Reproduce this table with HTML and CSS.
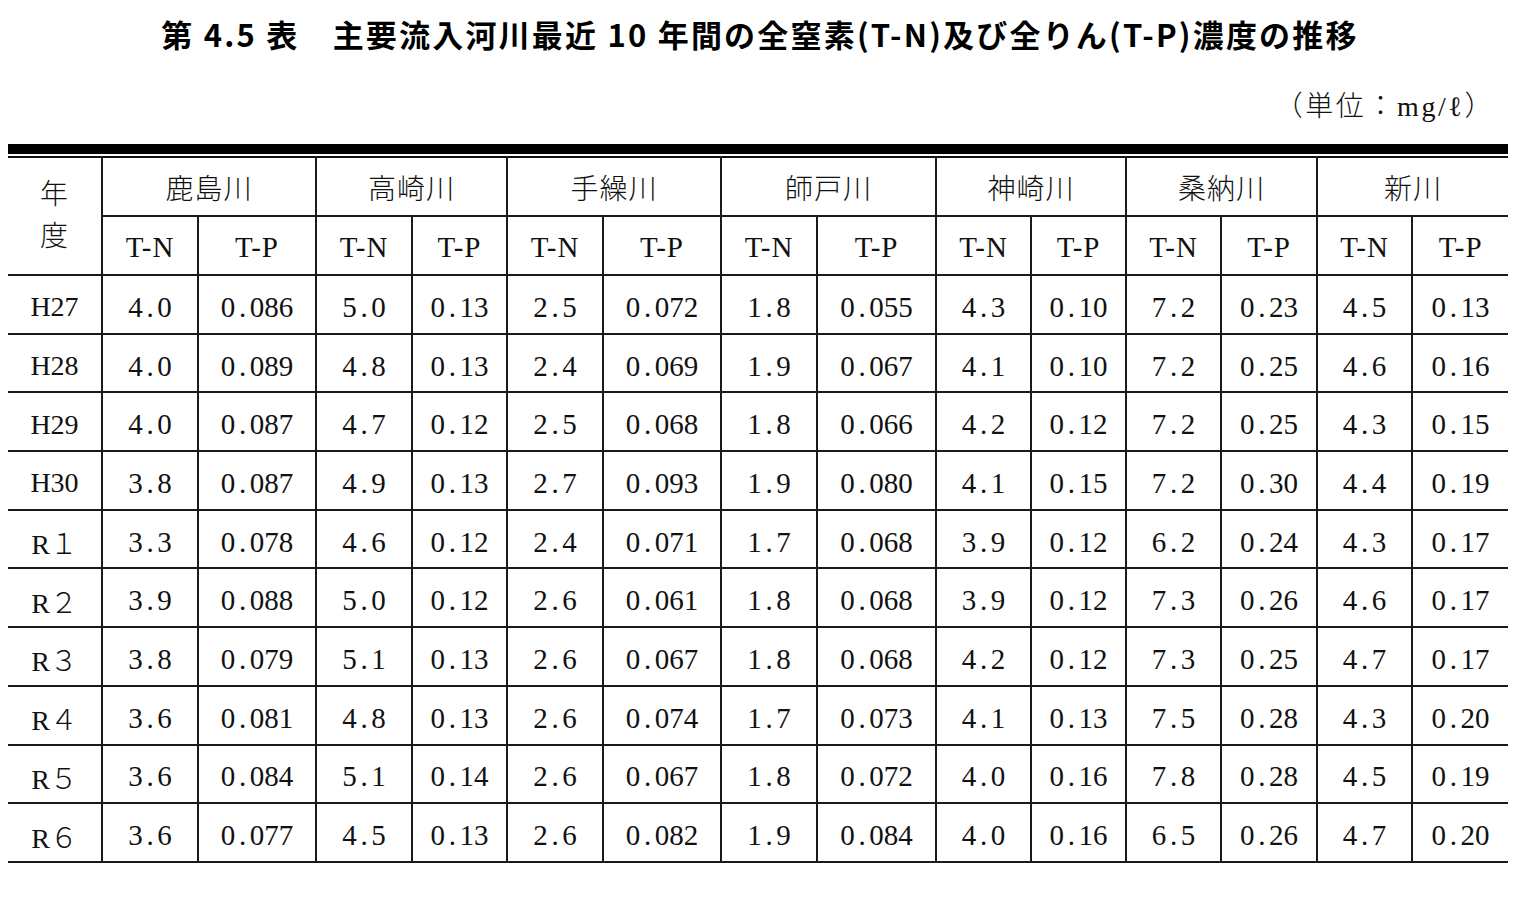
FILE: index.html
```html
<!DOCTYPE html>
<html lang="ja">
<head>
<meta charset="utf-8">
<title>第4.5表</title>
<link rel="stylesheet" href="styles.css">
</head>
<body>
<div class="page">
  <h1 class="title">第 4.5 表　主要流入河川最近 10 年間の全窒素(T-N)及び全りん(T-P)濃度の推移</h1>
  <div class="unit">（単位：mg/ℓ）</div>
  <div class="rule">
    <table class="data">
      <colgroup>
        <col style="width:94px">
        <col style="width:96px"><col style="width:118px">
        <col style="width:96px"><col style="width:95px">
        <col style="width:96px"><col style="width:118px">
        <col style="width:96px"><col style="width:119px">
        <col style="width:95px"><col style="width:95px">
        <col style="width:95px"><col style="width:96px">
        <col style="width:95px"><col style="width:96px">
      </colgroup>
      <thead>
        <tr class="hr1">
          <th rowspan="2" class="year-h">年<br>度</th>
          <th colspan="2">鹿島川</th>
          <th colspan="2">高崎川</th>
          <th colspan="2">手繰川</th>
          <th colspan="2">師戸川</th>
          <th colspan="2">神崎川</th>
          <th colspan="2">桑納川</th>
          <th colspan="2">新川</th>
        </tr>
        <tr class="hr2">
          <th>T-N</th><th>T-P</th>
          <th>T-N</th><th>T-P</th>
          <th>T-N</th><th>T-P</th>
          <th>T-N</th><th>T-P</th>
          <th>T-N</th><th>T-P</th>
          <th>T-N</th><th>T-P</th>
          <th>T-N</th><th>T-P</th>
        </tr>
      </thead>
      <tbody>
        <tr><td class="yr">H27</td><td>4<i>.</i>0</td><td>0<i>.</i>086</td><td>5<i>.</i>0</td><td>0<i>.</i>13</td><td>2<i>.</i>5</td><td>0<i>.</i>072</td><td>1<i>.</i>8</td><td>0<i>.</i>055</td><td>4<i>.</i>3</td><td>0<i>.</i>10</td><td>7<i>.</i>2</td><td>0<i>.</i>23</td><td>4<i>.</i>5</td><td>0<i>.</i>13</td></tr>
        <tr><td class="yr">H28</td><td>4<i>.</i>0</td><td>0<i>.</i>089</td><td>4<i>.</i>8</td><td>0<i>.</i>13</td><td>2<i>.</i>4</td><td>0<i>.</i>069</td><td>1<i>.</i>9</td><td>0<i>.</i>067</td><td>4<i>.</i>1</td><td>0<i>.</i>10</td><td>7<i>.</i>2</td><td>0<i>.</i>25</td><td>4<i>.</i>6</td><td>0<i>.</i>16</td></tr>
        <tr><td class="yr">H29</td><td>4<i>.</i>0</td><td>0<i>.</i>087</td><td>4<i>.</i>7</td><td>0<i>.</i>12</td><td>2<i>.</i>5</td><td>0<i>.</i>068</td><td>1<i>.</i>8</td><td>0<i>.</i>066</td><td>4<i>.</i>2</td><td>0<i>.</i>12</td><td>7<i>.</i>2</td><td>0<i>.</i>25</td><td>4<i>.</i>3</td><td>0<i>.</i>15</td></tr>
        <tr><td class="yr">H30</td><td>3<i>.</i>8</td><td>0<i>.</i>087</td><td>4<i>.</i>9</td><td>0<i>.</i>13</td><td>2<i>.</i>7</td><td>0<i>.</i>093</td><td>1<i>.</i>9</td><td>0<i>.</i>080</td><td>4<i>.</i>1</td><td>0<i>.</i>15</td><td>7<i>.</i>2</td><td>0<i>.</i>30</td><td>4<i>.</i>4</td><td>0<i>.</i>19</td></tr>
        <tr><td class="yr">R１</td><td>3<i>.</i>3</td><td>0<i>.</i>078</td><td>4<i>.</i>6</td><td>0<i>.</i>12</td><td>2<i>.</i>4</td><td>0<i>.</i>071</td><td>1<i>.</i>7</td><td>0<i>.</i>068</td><td>3<i>.</i>9</td><td>0<i>.</i>12</td><td>6<i>.</i>2</td><td>0<i>.</i>24</td><td>4<i>.</i>3</td><td>0<i>.</i>17</td></tr>
        <tr><td class="yr">R２</td><td>3<i>.</i>9</td><td>0<i>.</i>088</td><td>5<i>.</i>0</td><td>0<i>.</i>12</td><td>2<i>.</i>6</td><td>0<i>.</i>061</td><td>1<i>.</i>8</td><td>0<i>.</i>068</td><td>3<i>.</i>9</td><td>0<i>.</i>12</td><td>7<i>.</i>3</td><td>0<i>.</i>26</td><td>4<i>.</i>6</td><td>0<i>.</i>17</td></tr>
        <tr><td class="yr">R３</td><td>3<i>.</i>8</td><td>0<i>.</i>079</td><td>5<i>.</i>1</td><td>0<i>.</i>13</td><td>2<i>.</i>6</td><td>0<i>.</i>067</td><td>1<i>.</i>8</td><td>0<i>.</i>068</td><td>4<i>.</i>2</td><td>0<i>.</i>12</td><td>7<i>.</i>3</td><td>0<i>.</i>25</td><td>4<i>.</i>7</td><td>0<i>.</i>17</td></tr>
        <tr><td class="yr">R４</td><td>3<i>.</i>6</td><td>0<i>.</i>081</td><td>4<i>.</i>8</td><td>0<i>.</i>13</td><td>2<i>.</i>6</td><td>0<i>.</i>074</td><td>1<i>.</i>7</td><td>0<i>.</i>073</td><td>4<i>.</i>1</td><td>0<i>.</i>13</td><td>7<i>.</i>5</td><td>0<i>.</i>28</td><td>4<i>.</i>3</td><td>0<i>.</i>20</td></tr>
        <tr><td class="yr">R５</td><td>3<i>.</i>6</td><td>0<i>.</i>084</td><td>5<i>.</i>1</td><td>0<i>.</i>14</td><td>2<i>.</i>6</td><td>0<i>.</i>067</td><td>1<i>.</i>8</td><td>0<i>.</i>072</td><td>4<i>.</i>0</td><td>0<i>.</i>16</td><td>7<i>.</i>8</td><td>0<i>.</i>28</td><td>4<i>.</i>5</td><td>0<i>.</i>19</td></tr>
        <tr><td class="yr">R６</td><td>3<i>.</i>6</td><td>0<i>.</i>077</td><td>4<i>.</i>5</td><td>0<i>.</i>13</td><td>2<i>.</i>6</td><td>0<i>.</i>082</td><td>1<i>.</i>9</td><td>0<i>.</i>084</td><td>4<i>.</i>0</td><td>0<i>.</i>16</td><td>6<i>.</i>5</td><td>0<i>.</i>26</td><td>4<i>.</i>7</td><td>0<i>.</i>20</td></tr>
      </tbody>
    </table>
  </div>
</div>
</body>
</html>
```
FILE: styles.css
```css
html, body {
  margin: 0;
  padding: 0;
  background: #ffffff;
}

.page {
  width: 1500px;
  padding: 14px 13px 0 8px;
  color: #111111;
}

.title {
  margin: 0;
  height: 40px;
  line-height: 40px;
  font-family: "Noto Sans CJK JP", "Liberation Sans", sans-serif;
  font-weight: 700;
  font-size: 31px;
  letter-spacing: 2.2px;
  text-align: center;
  color: #000000;
  position: relative;
  left: 2px;
}

.unit {
  margin-top: 38px;
  height: 30px;
  line-height: 30px;
  padding-right: 13px;
  text-align: right;
  font-family: "Liberation Serif", "Noto Sans CJK JP", serif;
  font-weight: 300;
  font-size: 28px;
  letter-spacing: 2.6px;
}

.rule {
  margin-top: 22px;
  border-top: 10px solid #000000;
  padding-top: 2px;
}

.data {
  width: 1500px;
  table-layout: fixed;
  border-collapse: collapse;
  border-top: 2px solid #111111;
  font-family: "Liberation Serif", "Noto Sans CJK JP", serif;
  font-weight: 300;
  font-size: 28px;
}

.data th,
.data td {
  padding: 0;
  text-align: center;
  vertical-align: middle;
  font-weight: 300;
  border-left: 2px solid #1a1a1a;
  border-bottom: 2px solid #1a1a1a;
}

.data th:first-child,
.data td:first-child {
  border-left: none;
}

.hr2 th:first-child {
  border-left: 2px solid #1a1a1a;
}

.hr1 th {
  height: 57px;
  letter-spacing: 1px;
}

.hr2 th {
  letter-spacing: 1px;
  font-size: 29px;
  padding-top: 4px;
  height: 53px;
}

.year-h {
  line-height: 42px;
}

.data td {
  height: 50.7px;
  font-size: 29px;
  padding-top: 6px;
}

.data td i {
  font-style: normal;
  display: inline-block;
  width: 0.5em;
  text-align: center;
}

.data td.yr {
  font-size: 28px;
}
```
